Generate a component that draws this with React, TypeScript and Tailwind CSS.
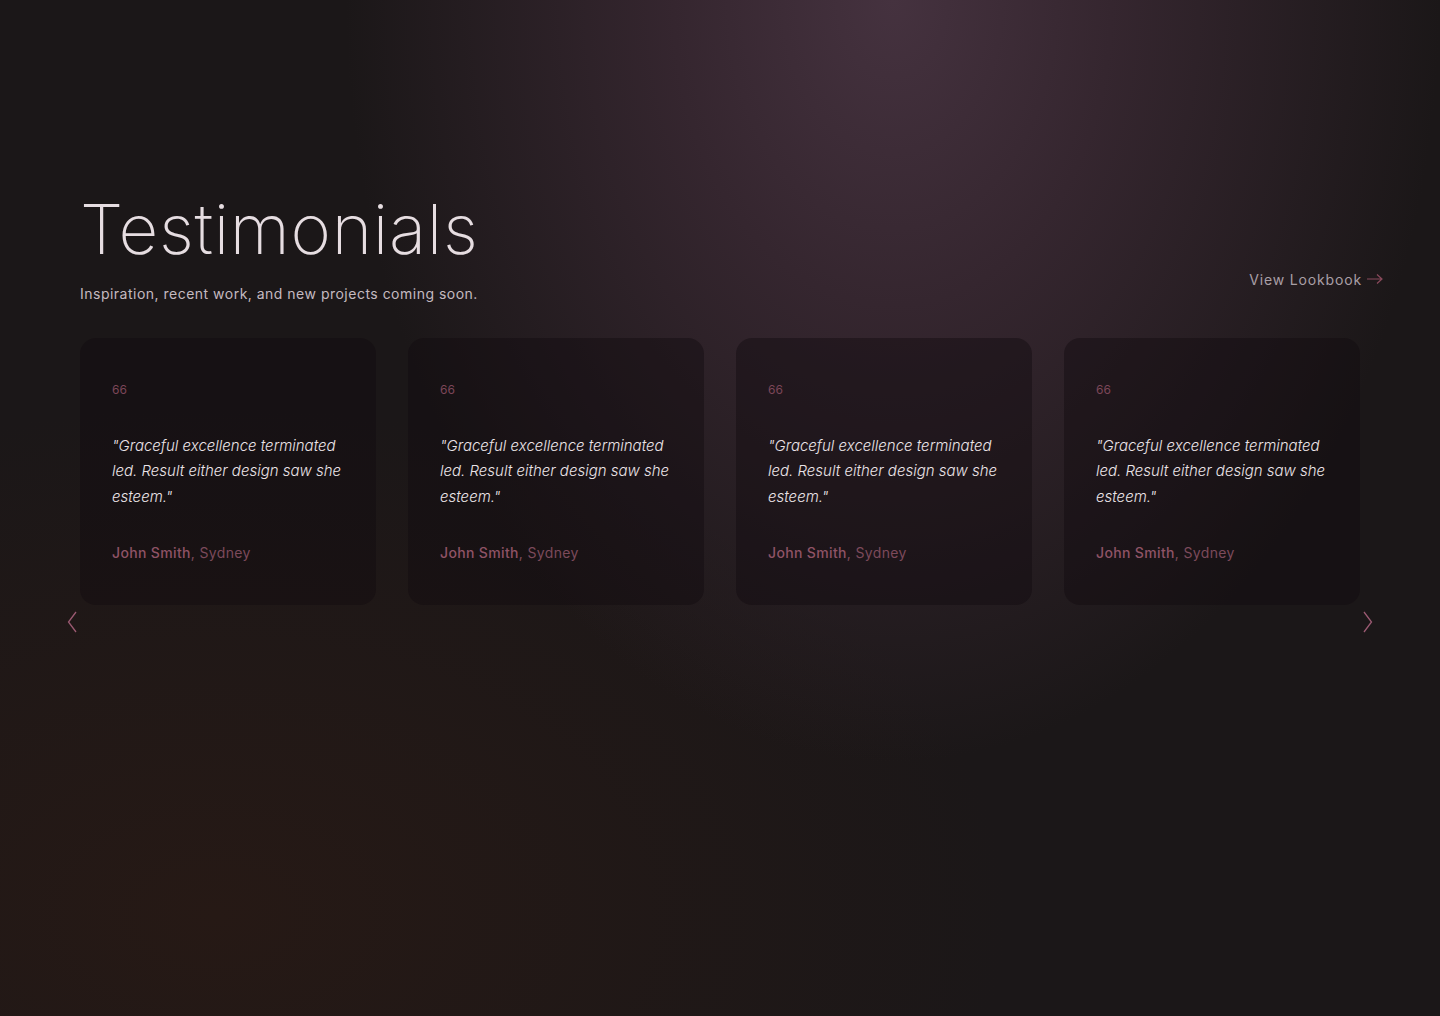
const testimonials = [
  { quote: '"Graceful excellence terminated led. Result either design saw she esteem."', name: 'John Smith', city: 'Sydney' },
  { quote: '"Graceful excellence terminated led. Result either design saw she esteem."', name: 'John Smith', city: 'Sydney' },
  { quote: '"Graceful excellence terminated led. Result either design saw she esteem."', name: 'John Smith', city: 'Sydney' },
  { quote: '"Graceful excellence terminated led. Result either design saw she esteem."', name: 'John Smith', city: 'Sydney' },
]

export default function App() {
  return (
    <div
      className="min-h-[1016px] w-full bg-[#1b1718] bg-[radial-gradient(ellipse_38%_75%_at_62%_0%,#45323f_0%,#35262f_40%,transparent_100%),radial-gradient(ellipse_55%_50%_at_15%_90%,#261915_0%,transparent_100%)] text-white"
      style={{ fontFamily: 'Inter, "Noto Sans", sans-serif' }}
    >
      <section className="pt-[188px]">
        {/* Header */}
        <div className="flex items-end justify-between pl-20 pr-[56px]">
          <div>
            <h1 className="text-[69px] leading-[1.2] font-extralight tracking-[0.01em] text-[#e6dde1]">
              Testimonials
            </h1>
            <p className="mt-[12px] text-[14px] tracking-[0.035em] text-[#c4bac0]">
              Inspiration, recent work, and new projects coming soon.
            </p>
          </div>
          <a href="#" className="mb-[14px] flex items-center gap-[4px] text-[14px] tracking-[0.06em] text-[#a99fa6]">
            View Lookbook
            <svg width="18" height="12" viewBox="0 0 18 12" fill="none" stroke="#8a4a5c" strokeWidth="1.2">
              <path d="M1 6h15M11 1.5 16 6l-5 4.5" />
            </svg>
          </a>
        </div>

        {/* Cards */}
        <div className="mt-[34px] flex gap-8 px-20">
          {testimonials.map((t, i) => (
            <div
              key={i}
              className="h-[267px] w-[296px] shrink-0 rounded-2xl bg-[#120c0f]/45 pl-8 pr-6 pt-[46px]"
            >
              <div className="text-[12px] leading-none text-[#7c4658]">66</div>
              <p className="mt-[37px] text-[15px] font-light italic leading-[25.5px] text-[#ebe3e7]">
                {t.quote}
              </p>
              <p className="mt-[33px] text-[14px] tracking-[0.025em]">
                <span className="font-medium text-[#8f5366]">{t.name}</span>
                <span className="text-[#7c4a5b]">, {t.city}</span>
              </p>
            </div>
          ))}
        </div>

        {/* Arrows */}
        <div className="mt-[6px] flex justify-between px-[67px]">
          <button className="text-[#9b5a72]">
            <svg width="10" height="22" viewBox="0 0 10 22" fill="none" stroke="currentColor" strokeWidth="1.3">
              <path d="M9 1 1.5 11 9 21" />
            </svg>
          </button>
          <button className="text-[#9b5a72]">
            <svg width="10" height="22" viewBox="0 0 10 22" fill="none" stroke="currentColor" strokeWidth="1.3">
              <path d="M1 1 8.5 11 1 21" />
            </svg>
          </button>
        </div>
      </section>
    </div>
  )
}
